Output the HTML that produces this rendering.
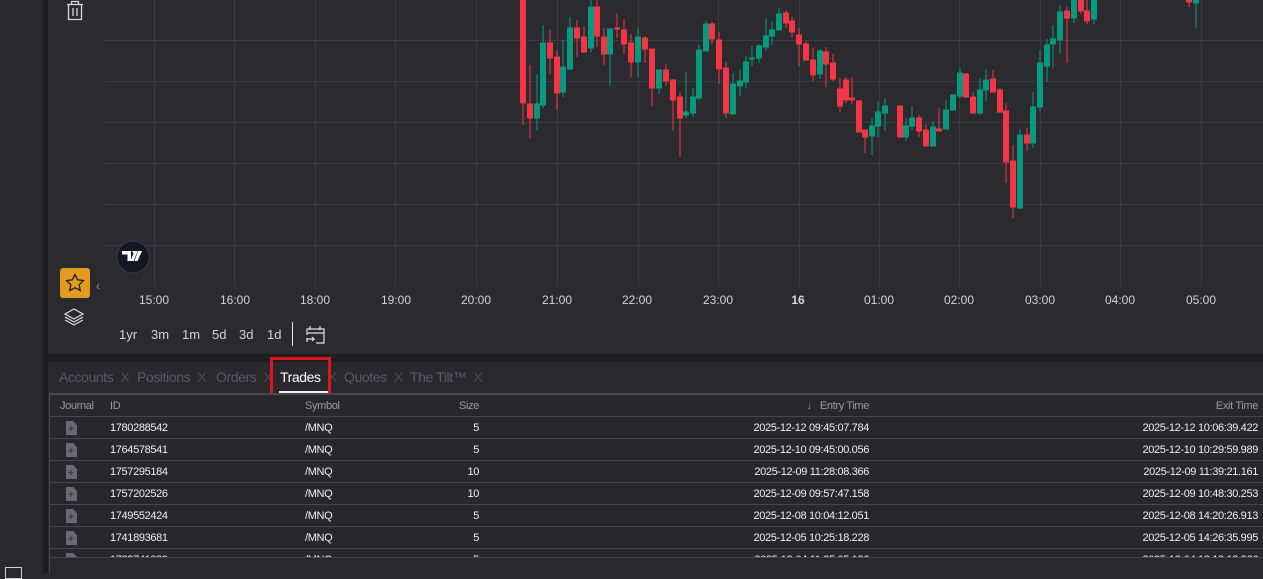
<!DOCTYPE html>
<html><head><meta charset="utf-8"><style>
*{margin:0;padding:0;box-sizing:border-box}
body{width:1263px;height:573px;overflow:hidden;background:#28282d;font-family:"Liberation Sans",sans-serif;position:relative}
.abs{position:absolute}
.tl{position:absolute;top:293px;font-size:12px;color:#d1d4dc;transform:translateX(-50%)}
.rb{position:absolute;top:327px;font-size:13px;color:#d1d4dc}
.tab{position:absolute;top:369px;font-size:14px;color:#5a5a62;letter-spacing:-.4px}
.tab i{font-style:normal;margin-left:7px;color:#4a4a52}
.row{position:absolute;left:49px;width:1214px;height:22px;border-bottom:1px solid #46464c;font-size:11px;color:#f0f0f0;letter-spacing:-.35px}
.row span{position:absolute;top:5px}
.hd span{color:#9a9aa2}
.doc{position:absolute;left:17px;top:4px;width:11px;height:14px;background:#6a6a70;clip-path:polygon(0 0,65% 0,100% 30%,100% 100%,0 100%)}
.doc:after{content:"+";position:absolute;left:2px;top:3px;font-size:10px;color:#3a3a40;font-weight:bold}
</style></head><body>
<div class="abs" style="left:0;top:0;width:43px;height:573px;background:#28282d"></div>
<div class="abs" style="left:43px;top:0;width:5px;height:573px;background:#1d1d21"></div>
<div class="abs" style="left:48px;top:0;width:1215px;height:354px;background:#2a2a2f"></div>
<div class="abs" style="left:48px;top:354px;width:1215px;height:8px;background:#1f1f23"></div>
<div class="abs" style="left:48px;top:362px;width:1215px;height:211px;background:#28282d"></div>
<svg class="abs" style="left:0;top:0" width="1263" height="354">
<g stroke="#3a3a40" stroke-width="1">
<line x1="105" y1="40.5" x2="1263" y2="40.5"/><line x1="105" y1="81.5" x2="1263" y2="81.5"/><line x1="105" y1="122.5" x2="1263" y2="122.5"/><line x1="105" y1="163.5" x2="1263" y2="163.5"/><line x1="105" y1="204.5" x2="1263" y2="204.5"/><line x1="105" y1="245.5" x2="1263" y2="245.5"/>
<line x1="154.5" y1="0" x2="154.5" y2="286"/><line x1="234.5" y1="0" x2="234.5" y2="286"/><line x1="315.5" y1="0" x2="315.5" y2="286"/><line x1="395.5" y1="0" x2="395.5" y2="286"/><line x1="476.5" y1="0" x2="476.5" y2="286"/><line x1="557.5" y1="0" x2="557.5" y2="286"/><line x1="638.5" y1="0" x2="638.5" y2="286"/><line x1="718.5" y1="0" x2="718.5" y2="286"/><line x1="799.5" y1="0" x2="799.5" y2="286"/><line x1="879.5" y1="0" x2="879.5" y2="286"/><line x1="959.5" y1="0" x2="959.5" y2="286"/><line x1="1040.5" y1="0" x2="1040.5" y2="286"/><line x1="1120.5" y1="0" x2="1120.5" y2="286"/><line x1="1201.5" y1="0" x2="1201.5" y2="286"/>
</g>
<g stroke-width="1">
<g fill="#f23645" stroke="#f23645">
<line x1="523" y1="0" x2="523" y2="125"/><rect x="520.5" y="0" width="5" height="103"/>
<line x1="530" y1="65" x2="530" y2="138"/><rect x="527.5" y="104" width="5" height="14"/>
<line x1="550" y1="30" x2="550" y2="74"/><rect x="547.5" y="43" width="5" height="15"/>
<line x1="557" y1="50" x2="557" y2="110"/><rect x="554.5" y="57" width="5" height="36"/>
<line x1="577" y1="20" x2="577" y2="57"/><rect x="574.5" y="28" width="5" height="10"/>
<line x1="584" y1="26" x2="584" y2="53"/><rect x="581.5" y="37" width="5" height="15"/>
<line x1="597" y1="0" x2="597" y2="47"/><rect x="594.5" y="7" width="5" height="29"/>
<line x1="604" y1="28" x2="604" y2="65"/><rect x="601.5" y="37" width="5" height="17"/>
<line x1="617" y1="13" x2="617" y2="38"/><rect x="614.5" y="28" width="5" height="1"/>
<line x1="624" y1="19" x2="624" y2="54"/><rect x="621.5" y="30" width="5" height="14"/>
<line x1="631" y1="34" x2="631" y2="77"/><rect x="628.5" y="43" width="5" height="19"/>
<line x1="645" y1="36" x2="645" y2="63"/><rect x="642.5" y="38" width="5" height="11"/>
<line x1="652" y1="49" x2="652" y2="106"/><rect x="649.5" y="49" width="5" height="39"/>
<line x1="666" y1="64" x2="666" y2="86"/><rect x="663.5" y="70" width="5" height="11"/>
<line x1="673" y1="79" x2="673" y2="131"/><rect x="670.5" y="80" width="5" height="20"/>
<line x1="680" y1="92" x2="680" y2="157"/><rect x="677.5" y="97" width="5" height="21"/>
<line x1="712" y1="22" x2="712" y2="44"/><rect x="709.5" y="24" width="5" height="15"/>
<line x1="719" y1="32" x2="719" y2="84"/><rect x="716.5" y="40" width="5" height="29"/>
<line x1="726" y1="62" x2="726" y2="118"/><rect x="723.5" y="68" width="5" height="45"/>
<line x1="786" y1="10" x2="786" y2="28"/><rect x="783.5" y="13" width="5" height="10"/>
<line x1="792" y1="17" x2="792" y2="37"/><rect x="789.5" y="21" width="5" height="11"/>
<line x1="799" y1="28" x2="799" y2="66"/><rect x="796.5" y="35" width="5" height="9"/>
<line x1="806" y1="41" x2="806" y2="60"/><rect x="803.5" y="44" width="5" height="16"/>
<line x1="813" y1="48" x2="813" y2="81"/><rect x="810.5" y="60" width="5" height="15"/>
<line x1="826" y1="47" x2="826" y2="87"/><rect x="823.5" y="52" width="5" height="12"/>
<line x1="833" y1="54" x2="833" y2="81"/><rect x="830.5" y="63" width="5" height="16"/>
<line x1="840" y1="78" x2="840" y2="112"/><rect x="837.5" y="89" width="5" height="17"/>
<line x1="846" y1="77" x2="846" y2="103"/><rect x="843.5" y="80" width="5" height="20"/>
<line x1="852" y1="77" x2="852" y2="104"/><rect x="849.5" y="98" width="5" height="2"/>
<line x1="859" y1="100" x2="859" y2="131"/><rect x="856.5" y="101" width="5" height="31"/>
<line x1="865" y1="130" x2="865" y2="153"/><rect x="862.5" y="130" width="5" height="7"/>
<line x1="900" y1="106" x2="900" y2="137"/><rect x="897.5" y="106" width="5" height="31"/>
<line x1="919" y1="115" x2="919" y2="137"/><rect x="916.5" y="118" width="5" height="13"/>
<line x1="926" y1="124" x2="926" y2="146"/><rect x="923.5" y="130" width="5" height="16"/>
<line x1="939" y1="108" x2="939" y2="131"/><rect x="936.5" y="129" width="5" height="2"/>
<line x1="966" y1="73" x2="966" y2="98"/><rect x="963.5" y="74" width="5" height="23"/>
<line x1="973" y1="92" x2="973" y2="114"/><rect x="970.5" y="97" width="5" height="16"/>
<line x1="993" y1="70" x2="993" y2="92"/><rect x="990.5" y="79" width="5" height="13"/>
<line x1="1000" y1="88" x2="1000" y2="112"/><rect x="997.5" y="90" width="5" height="22"/>
<line x1="1006" y1="103" x2="1006" y2="183"/><rect x="1003.5" y="111" width="5" height="51"/>
<line x1="1013" y1="145" x2="1013" y2="218"/><rect x="1010.5" y="161" width="5" height="46"/>
<line x1="1027" y1="128" x2="1027" y2="151"/><rect x="1024.5" y="135" width="5" height="8"/>
<line x1="1067" y1="7" x2="1067" y2="63"/><rect x="1064.5" y="11" width="5" height="7"/>
<line x1="1081" y1="0" x2="1081" y2="14"/><rect x="1078.5" y="0" width="5" height="11"/>
<line x1="1087" y1="0" x2="1087" y2="24"/><rect x="1084.5" y="11" width="5" height="10"/>
<line x1="1189" y1="0" x2="1189" y2="7"/><rect x="1186.5" y="0" width="5" height="2"/>
</g>
<g fill="#089981" stroke="#089981">
<line x1="537" y1="74" x2="537" y2="130"/><rect x="534.5" y="104" width="5" height="14"/>
<line x1="543" y1="25" x2="543" y2="108"/><rect x="540.5" y="43" width="5" height="62"/>
<line x1="563" y1="40" x2="563" y2="97"/><rect x="560.5" y="67" width="5" height="25"/>
<line x1="570" y1="17" x2="570" y2="70"/><rect x="567.5" y="28" width="5" height="41"/>
<line x1="591" y1="0" x2="591" y2="52"/><rect x="588.5" y="7" width="5" height="41"/>
<line x1="610" y1="28" x2="610" y2="86"/><rect x="607.5" y="29" width="5" height="25"/>
<line x1="638" y1="28" x2="638" y2="77"/><rect x="635.5" y="37" width="5" height="25"/>
<line x1="659" y1="70" x2="659" y2="94"/><rect x="656.5" y="70" width="5" height="18"/>
<line x1="686" y1="72" x2="686" y2="118"/><rect x="683.5" y="112" width="5" height="3"/>
<line x1="693" y1="88" x2="693" y2="117"/><rect x="690.5" y="97" width="5" height="16"/>
<line x1="699" y1="45" x2="699" y2="100"/><rect x="696.5" y="50" width="5" height="48"/>
<line x1="706" y1="21" x2="706" y2="49"/><rect x="703.5" y="24" width="5" height="27"/>
<line x1="733" y1="73" x2="733" y2="114"/><rect x="730.5" y="84" width="5" height="30"/>
<line x1="740" y1="69" x2="740" y2="96"/><rect x="737.5" y="81" width="5" height="5"/>
<line x1="746" y1="56" x2="746" y2="88"/><rect x="743.5" y="62" width="5" height="20"/>
<line x1="752" y1="46" x2="752" y2="66"/><rect x="749.5" y="58" width="5" height="1"/>
<line x1="759" y1="44" x2="759" y2="63"/><rect x="756.5" y="46" width="5" height="12"/>
<line x1="766" y1="18" x2="766" y2="51"/><rect x="763.5" y="36" width="5" height="11"/>
<line x1="772" y1="22" x2="772" y2="45"/><rect x="769.5" y="30" width="5" height="6"/>
<line x1="779" y1="8" x2="779" y2="30"/><rect x="776.5" y="14" width="5" height="16"/>
<line x1="820" y1="49" x2="820" y2="79"/><rect x="817.5" y="51" width="5" height="23"/>
<line x1="872" y1="118" x2="872" y2="155"/><rect x="869.5" y="126" width="5" height="10"/>
<line x1="878" y1="102" x2="878" y2="137"/><rect x="875.5" y="112" width="5" height="14"/>
<line x1="885" y1="98" x2="885" y2="131"/><rect x="882.5" y="106" width="5" height="7"/>
<line x1="906" y1="118" x2="906" y2="141"/><rect x="903.5" y="126" width="5" height="11"/>
<line x1="912" y1="106" x2="912" y2="130"/><rect x="909.5" y="118" width="5" height="8"/>
<line x1="933" y1="121" x2="933" y2="146"/><rect x="930.5" y="127" width="5" height="19"/>
<line x1="946" y1="100" x2="946" y2="129"/><rect x="943.5" y="110" width="5" height="19"/>
<line x1="953" y1="94" x2="953" y2="110"/><rect x="950.5" y="95" width="5" height="15"/>
<line x1="960" y1="68" x2="960" y2="98"/><rect x="957.5" y="73" width="5" height="23"/>
<line x1="980" y1="78" x2="980" y2="115"/><rect x="977.5" y="90" width="5" height="23"/>
<line x1="986" y1="69" x2="986" y2="101"/><rect x="983.5" y="80" width="5" height="10"/>
<line x1="1020" y1="129" x2="1020" y2="209"/><rect x="1017.5" y="135" width="5" height="73"/>
<line x1="1033" y1="92" x2="1033" y2="148"/><rect x="1030.5" y="107" width="5" height="36"/>
<line x1="1040" y1="50" x2="1040" y2="111"/><rect x="1037.5" y="63" width="5" height="44"/>
<line x1="1047" y1="39" x2="1047" y2="82"/><rect x="1044.5" y="45" width="5" height="21"/>
<line x1="1053" y1="25" x2="1053" y2="68"/><rect x="1050.5" y="39" width="5" height="5"/>
<line x1="1060" y1="5" x2="1060" y2="54"/><rect x="1057.5" y="12" width="5" height="28"/>
<line x1="1074" y1="0" x2="1074" y2="23"/><rect x="1071.5" y="0" width="5" height="18"/>
<line x1="1094" y1="0" x2="1094" y2="24"/><rect x="1091.5" y="0" width="5" height="19"/>
<line x1="1196" y1="0" x2="1196" y2="28"/><rect x="1193.5" y="0" width="5" height="3"/>
</g>
</g>
<g fill="none" stroke="#d8d8dc" stroke-width="1.3">
<path d="M67 4.5h16M71.5 4.5v-3h7v3M68.5 4.5v15h13v-15M73 8v8M77 8v8"/>
</g>
<circle cx="133" cy="257" r="16" fill="#131722" stroke="#3a3d48"/>
<path d="M122 251h9v10h-3.5v-6.5H122z M132 251h3l0 0 2.5 0 -3.8 10h-3.2l3-7.5z M138 251h4l-4.5 10h-3z" fill="#fff"/>
<rect x="60" y="268" width="30" height="30" rx="3" fill="#e29b1e"/>
<path d="M75 274.5l2.6 5.3 5.8.8-4.2 4.1 1 5.8-5.2-2.8-5.2 2.8 1-5.8-4.2-4.1 5.8-.8z" fill="none" stroke="#1e1e22" stroke-width="1.3"/>
<text x="96" y="290" fill="#8a8a90" font-size="12" font-family="Liberation Sans">‹</text>
<g fill="none" stroke="#e0e0e4" stroke-width="1.2">
<path d="M74 309l9 5-9 5-9-5z"/><path d="M65 317l9 5 9-5"/><path d="M65 320l9 5 9-5"/>
</g>
<line x1="292.5" y1="322" x2="292.5" y2="346" stroke="#e8e8ea"/>
<g fill="none" stroke="#e0e0e4" stroke-width="1.2">
<path d="M311 329h13v14h-8M307 335v-6h4M307 333h17M310 326v4M320 326v4M307 339h7l-2-2M314 339l-2 2M307 338v4"/>
</g>
</svg>
<div class="tl" style="left:154px">15:00</div><div class="tl" style="left:235px">16:00</div><div class="tl" style="left:315px">18:00</div><div class="tl" style="left:396px">19:00</div><div class="tl" style="left:476px">20:00</div><div class="tl" style="left:557px">21:00</div><div class="tl" style="left:637px">22:00</div><div class="tl" style="left:718px">23:00</div><div class="tl" style="left:798px;font-weight:bold">16</div><div class="tl" style="left:879px">01:00</div><div class="tl" style="left:959px">02:00</div><div class="tl" style="left:1040px">03:00</div><div class="tl" style="left:1120px">04:00</div><div class="tl" style="left:1201px">05:00</div>
<div class="rb" style="left:119px">1yr</div><div class="rb" style="left:151px">3m</div><div class="rb" style="left:182px">1m</div><div class="rb" style="left:212px">5d</div><div class="rb" style="left:239px">3d</div><div class="rb" style="left:267px">1d</div>
<div class="tab" style="left:59px">Accounts<i>X</i></div>
<div class="tab" style="left:137px">Positions<i>X</i></div>
<div class="tab" style="left:216px">Orders<i>X</i></div>
<div class="tab" style="left:280px;color:#fff">Trades<i>X</i></div>
<div class="tab" style="left:344px">Quotes<i>X</i></div>
<div class="tab" style="left:410px">The Tilt™<i>X</i></div>
<div class="abs" style="left:279px;top:391px;width:49px;height:2px;background:#f0f0f0"></div>
<div class="abs" style="left:270px;top:357px;width:61px;height:39px;border:3px solid #e0141d"></div>
<div class="abs" style="left:49px;top:393px;width:1214px;height:2px;background:#4a4a50"></div>
<div class="abs" style="left:49px;top:395px;width:1px;height:178px;background:#4a4a50"></div>
<div class="abs" style="left:50px;top:395px;width:1213px;height:162px;background:#27272c"></div>
<div class="row hd" style="top:395px"><span style="left:11px">Journal</span><span style="left:61px">ID</span><span style="left:256px">Symbol</span><span style="right:784px">Size</span><span style="right:394px">↓&nbsp;&nbsp; Entry Time</span><span style="right:5px">Exit Time</span></div>
<div class="row" style="top:417px"><div class="doc"></div><span style="left:61px">1780288542</span><span style="left:256px">/MNQ</span><span style="right:784px">5</span><span style="right:394px">2025-12-12 09:45:07.784</span><span style="right:5px">2025-12-12 10:06:39.422</span></div>
<div class="row" style="top:439px"><div class="doc"></div><span style="left:61px">1764578541</span><span style="left:256px">/MNQ</span><span style="right:784px">5</span><span style="right:394px">2025-12-10 09:45:00.056</span><span style="right:5px">2025-12-10 10:29:59.989</span></div>
<div class="row" style="top:461px"><div class="doc"></div><span style="left:61px">1757295184</span><span style="left:256px">/MNQ</span><span style="right:784px">10</span><span style="right:394px">2025-12-09 11:28:08.366</span><span style="right:5px">2025-12-09 11:39:21.161</span></div>
<div class="row" style="top:483px"><div class="doc"></div><span style="left:61px">1757202526</span><span style="left:256px">/MNQ</span><span style="right:784px">10</span><span style="right:394px">2025-12-09 09:57:47.158</span><span style="right:5px">2025-12-09 10:48:30.253</span></div>
<div class="row" style="top:505px"><div class="doc"></div><span style="left:61px">1749552424</span><span style="left:256px">/MNQ</span><span style="right:784px">5</span><span style="right:394px">2025-12-08 10:04:12.051</span><span style="right:5px">2025-12-08 14:20:26.913</span></div>
<div class="row" style="top:527px"><div class="doc"></div><span style="left:61px">1741893681</span><span style="left:256px">/MNQ</span><span style="right:784px">5</span><span style="right:394px">2025-12-05 10:25:18.228</span><span style="right:5px">2025-12-05 14:26:35.995</span></div>
<div class="abs" style="left:50px;top:549px;width:1213px;height:8px;overflow:hidden"><div class="row" style="left:-1px;top:0;border:none"><div class="doc"></div><span style="left:61px">1733741829</span><span style="left:256px">/MNQ</span><span style="right:784px">5</span><span style="right:394px">2025-12-04 11:35:05.186</span><span style="right:5px">2025-12-04 13:13:13.866</span></div></div>
<div class="abs" style="left:50px;top:557px;width:1213px;height:1px;background:#46464c"></div>
<div class="abs" style="left:5px;top:567px;width:17px;height:12px;border:1.5px solid #d0d0d4"></div>
</body></html>
